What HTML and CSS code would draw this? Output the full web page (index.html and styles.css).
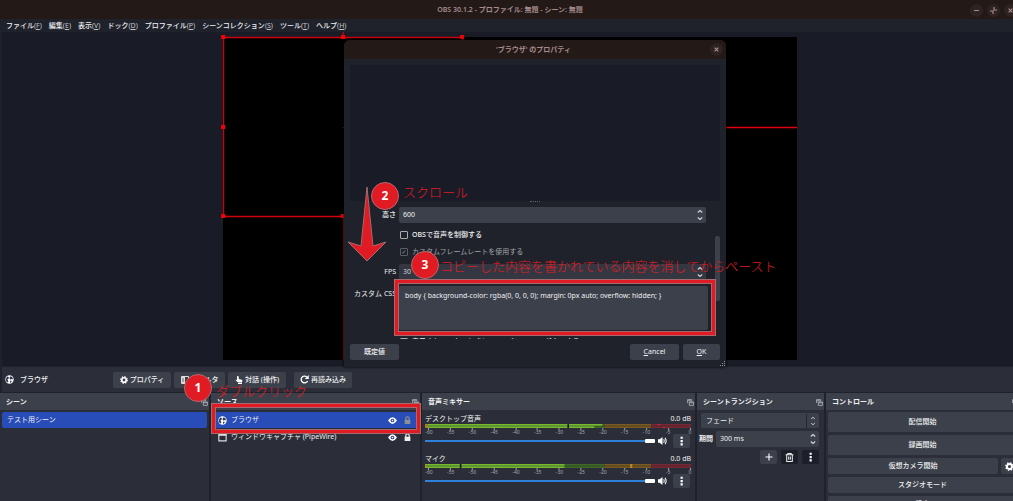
FILE: index.html
```html
<!DOCTYPE html>
<html lang="ja">
<head>
<meta charset="utf-8">
<title>OBS 30.1.2</title>
<link rel="stylesheet" href="styles.css">
</head>
<body>
<svg class="defs" aria-hidden="true">
  <symbol id="i-globe" viewBox="0 0 16 16"><circle cx="8" cy="8" r="7.500" fill="#fff"/><path d="M4 2.500 7 4 6 7 4 8 6 11 5 13.500 2 11 1.500 7zM10 2l3 2 1.500 4-2.500-1-3 1-1-3zM9 10l3 0-1 3-2 1z" fill="#2a3350"/></symbol>
  <symbol id="i-gear" viewBox="0 0 16 16"><circle cx="8" cy="8" r="4.500" fill="none" stroke="#fff" stroke-width="3.400"/><circle cx="8" cy="8" r="6.600" fill="none" stroke="#fff" stroke-width="2.400" stroke-dasharray="2.700 2.480"/></symbol>
  <symbol id="i-filter" viewBox="0 0 16 16"><path d="M1 1h14v14H1z" fill="none" stroke="#ddd" stroke-width="2"/><path d="M2 2h6v12H2z" fill="#ddd"/><path d="M4 4v8" stroke="#444" stroke-width="1.500"/></symbol>
  <symbol id="i-hand" viewBox="0 0 16 16"><path d="M4 0.500q2.500-1 3.500 1V6l6 1.500q1.500.5 1.200 2L14 13H6L1 8q1-1.500 3 0zM6 14h8v2H6z" fill="#fff"/></symbol>
  <symbol id="i-reload" viewBox="0 0 16 16"><path d="M13.500 10.500A6 6 0 1 1 12 3.500" fill="none" stroke="#fff" stroke-width="2.400"/><path d="M15.500 0v7H8.500z" fill="#fff"/></symbol>
  <symbol id="i-eye" viewBox="0 0 16 12"><path d="M0 6q8-12 16 0-8 12-16 0z" fill="#fff"/><circle cx="8" cy="6" r="3.300" fill="#29438f"/><circle cx="8" cy="6" r="1.500" fill="#fff"/></symbol>
  <symbol id="i-lock" viewBox="0 0 12 14"><path d="M3 7V4.500a3 3 0 0 1 6 0V7" fill="none" stroke="currentColor" stroke-width="2"/><path d="M1 6.500h10V14H1z" fill="currentColor"/></symbol>
  <symbol id="i-window" viewBox="0 0 16 16"><path d="M1.500 2h13v12h-13z" fill="none" stroke="#ddd" stroke-width="2"/><path d="M1 1h14v4H1z" fill="#ddd"/></symbol>
  <symbol id="i-float" viewBox="0 0 12 12"><path d="M1 7V1h7v2M1 3h7M4 5h7v6H4zM4 6.500h7" fill="none" stroke="#b9bbc1" stroke-width="1.300"/></symbol>
  <symbol id="i-speaker" viewBox="0 0 16 14"><path d="M0 4h3l5-4v14L3 10H0z" fill="#fff"/><path d="M10 4q2 3 0 6M12.500 1.500q4 5.500 0 11" fill="none" stroke="#fff" stroke-width="1.800"/></symbol>
  <symbol id="i-dots" viewBox="0 0 4 16"><path d="M.5 1h3.500v3.500H.5zM.5 6.300H4v3.500H.5zM.5 11.600H4v3.500H.5z" fill="#fff"/></symbol>
  <symbol id="i-plus" viewBox="0 0 16 16"><path d="M8 1v14M1 8h14" stroke="#fff" stroke-width="2.200"/></symbol>
  <symbol id="i-trash" viewBox="0 0 16 16"><path d="M1 3h14M5 2.500V1h6v1.500M3 3.500V15h10V3.500M6.500 6v6M9.500 6v6" fill="none" stroke="#eee" stroke-width="1.800"/></symbol>
  <symbol id="i-spin" viewBox="0 0 6 12"><path d="M.8 3.500 3 1.500 5.200 3.500M.8 8.500 3 10.500 5.200 8.500" fill="none" stroke="#d5d6d9" stroke-width="1.100"/></symbol>
  <symbol id="i-x" viewBox="0 0 8 8"><path d="M1 1l6 6M7 1 1 7" stroke="currentColor" stroke-width="2"/></symbol>
</svg>

<div class="app">
  <header class="titlebar">
    <span></span>
    <h1 class="title">OBS 30.1.2 - プロファイル: 無題 - シーン: 無題</h1>
    <div class="winbtns">
      <button class="round" aria-label="最小化"><svg width="5" height="5" viewBox="0 0 5 5"><path d="M0 2.500h5" stroke="currentColor"/></svg></button>
      <button class="round" aria-label="元に戻す"><svg width="7" height="7" viewBox="0 0 7 7"><path d="M4 0v3h3M0 4h3v3" fill="none" stroke="currentColor" stroke-width="1.200"/></svg></button>
      <button class="round" aria-label="閉じる"><svg width="5" height="5"><use href="#i-x"/></svg></button>
    </div>
  </header>
  <nav class="menubar">
    <button>ファイル<span class="key">(<u>F</u>)</span></button><button>編集<span class="key">(<u>E</u>)</span></button><button>表示<span class="key">(<u>V</u>)</span></button><button>ドック<span class="key">(<u>D</u>)</span></button><button>プロファイル<span class="key">(<u>P</u>)</span></button><button>シーンコレクション<span class="key">(<u>S</u>)</span></button><button>ツール<span class="key">(<u>T</u>)</span></button><button>ヘルプ<span class="key">(<u>H</u>)</span></button>
  </nav>
  <main class="preview">
    <div class="canvas">
      <svg class="selection" viewBox="0 0 574 323">
        <path d="M120.500 180v143M120 90.500h454" stroke="#a80008" fill="none"/>
        <path d="M400 90.500h174" stroke="#e0000c" stroke-width="1.300"/>
        <path d="M.5.500h239v179H.5zM120-5v5" stroke="#cf0008" fill="none" stroke-width="1.300"/>
        <path d="M-2-2h4v4h-4zM118-2h4v4h-4zM237-2h4v4h-4zM-2 88h4v4h-4zM-2 177h4v4h-4zM118 177h4v4h-4z" fill="#f40009"/>
      </svg>
    </div>
  </main>
  <section class="context">
    <svg class="ic9"><use href="#i-globe"/></svg>
    <span class="context-name">ブラウザ</span>
    <div class="context-btns">
      <button class="btn"><svg class="ic8"><use href="#i-gear"/></svg>プロパティ</button>
      <button class="btn filter"><svg class="ic8"><use href="#i-filter"/></svg>フィルタ</button>
      <button class="btn"><svg class="ic8"><use href="#i-hand"/></svg>対話 (操作)</button>
      <button class="btn reload"><svg class="ic9"><use href="#i-reload"/></svg>再読み込み</button>
    </div>
  </section>

  <div class="docks">
    <section class="dock">
      <h2 class="dock-head">シーン<svg class="ic6"><use href="#i-float"/></svg></h2>
      <ul class="list scenes"><li class="row selected">テスト用シーン</li></ul>
    </section>
    <section class="dock">
      <h2 class="dock-head">ソース<svg class="ic6"><use href="#i-float"/></svg></h2>
      <ul class="list">
        <li class="row source selected"><svg class="ic9"><use href="#i-globe"/></svg><span class="grow">ブラウザ</span><svg class="eye"><use href="#i-eye"/></svg><svg class="lock dim"><use href="#i-lock"/></svg></li>
        <li class="row source"><svg class="ic9"><use href="#i-window"/></svg><span class="grow">ウィンドウキャプチャ (PipeWire)</span><svg class="eye"><use href="#i-eye"/></svg><svg class="lock"><use href="#i-lock"/></svg></li>
      </ul>
    </section>
    <section class="dock">
      <h2 class="dock-head">音声ミキサー<svg class="ic6"><use href="#i-float"/></svg></h2>
      <div class="mixer">
        <div class="channel">
          <div class="channel-top"><label for="v1">デスクトップ音声</label><span>0.0 dB</span></div>
          <svg class="meter" viewBox="0 0 267 6" preserveAspectRatio="none">
            <path d="M0 0h180v4H0z" fill="#3f6a26"/><path d="M180 0h47v4h-47z" fill="#7a5a1f"/><path d="M227 0h40v4h-40z" fill="#782733"/>
            <path d="M0 0h178v2H0zM0 2h170v2H0z" fill="#75b92f"/><path d="M0 2h267" stroke="#20242c" stroke-width=".5"/><path d="M0 0h3v4H0z" fill="#a87a24"/><path d="M143 0h1.500v4H143z" fill="#10140f"/><path d="M234 0h2v1h-2zM239 3h2v1h-2z" fill="#e02b3d"/>
            <path d="M3.500 4v2M25.500 4v2M47.500 4v2M69.500 4v2M91.500 4v2M112.500 4v2M134.500 4v2M156.500 4v2M178.500 4v2M200.500 4v2M222.500 4v2M244.500 4v2M266.500 4v2" stroke="#9b9da3"/>
          </svg>
          <div class="scale"><span>-60</span><span>-55</span><span>-50</span><span>-45</span><span>-40</span><span>-35</span><span>-30</span><span>-25</span><span>-20</span><span>-15</span><span>-10</span><span>-5</span><span>0</span></div>
          <div class="fader"><input id="v1" type="range" value="100"><svg class="spk"><use href="#i-speaker"/></svg><button class="btn more" aria-label="メニュー"><svg class="dots"><use href="#i-dots"/></svg></button></div>
        </div>
        <div class="channel">
          <div class="channel-top"><label for="v2">マイク</label><span>0.0 dB</span></div>
          <svg class="meter" viewBox="0 0 267 6" preserveAspectRatio="none">
            <path d="M0 0h180v4H0z" fill="#3f6a26"/><path d="M180 0h47v4h-47z" fill="#7a5a1f"/><path d="M227 0h40v4h-40z" fill="#782733"/>
            <path d="M0 0h140v4H0z" fill="#75b92f"/><path d="M0 2h267" stroke="#20242c" stroke-width=".5"/><path d="M0 0h1v4H0zM206 0h2v4h-2z" fill="#c08a20"/><path d="M35 0h1.500v4H35z" fill="#10140f"/>
            <path d="M3.500 4v2M25.500 4v2M47.500 4v2M69.500 4v2M91.500 4v2M112.500 4v2M134.500 4v2M156.500 4v2M178.500 4v2M200.500 4v2M222.500 4v2M244.500 4v2M266.500 4v2" stroke="#9b9da3"/>
          </svg>
          <div class="scale"><span>-60</span><span>-55</span><span>-50</span><span>-45</span><span>-40</span><span>-35</span><span>-30</span><span>-25</span><span>-20</span><span>-15</span><span>-10</span><span>-5</span><span>0</span></div>
          <div class="fader"><input id="v2" type="range" value="100"><svg class="spk"><use href="#i-speaker"/></svg><button class="btn more" aria-label="メニュー"><svg class="dots"><use href="#i-dots"/></svg></button></div>
        </div>
      </div>
    </section>
    <section class="dock">
      <h2 class="dock-head">シーントランジション<svg class="ic6"><use href="#i-float"/></svg></h2>
      <div class="transitions">
        <div class="field combo"><select aria-label="トランジション"><option>フェード</option></select><svg class="spin"><use href="#i-spin"/></svg></div>
        <div class="duration"><label for="dur">期間</label><div class="field"><input id="dur" type="text" value="300 ms"><svg class="spin"><use href="#i-spin"/></svg></div></div>
        <div class="tools"><button class="btn tool" aria-label="追加"><svg class="ic8"><use href="#i-plus"/></svg></button><button class="btn tool dark" aria-label="削除"><svg class="ic9"><use href="#i-trash"/></svg></button><button class="btn tool dark" aria-label="メニュー"><svg class="dots"><use href="#i-dots"/></svg></button></div>
      </div>
    </section>
    <section class="dock">
      <h2 class="dock-head">コントロール<svg class="ic6"><use href="#i-float"/></svg></h2>
      <div class="controls">
        <button class="btn tall">配信開始</button>
        <button class="btn tall">録画開始</button>
        <div class="pair"><button class="btn grow">仮想カメラ開始</button><button class="btn gear" aria-label="仮想カメラ設定"><svg class="ic9"><use href="#i-gear"/></svg></button></div>
        <button class="btn">スタジオモード</button>
        <button class="btn">設定</button>
      </div>
    </section>
  </div>

  <div class="dialog" role="dialog" aria-labelledby="dt">
    <header class="dialog-title"><span></span><h2 id="dt">'ブラウザ' のプロパティ</h2><button class="round" aria-label="閉じる"><svg width="5" height="5"><use href="#i-x"/></svg></button></header>
    <div class="dialog-body">
      <div class="source-view"></div>
      <div class="splitter"></div>
      <div class="form-area">
        <form class="form">
          <div class="form-row"><label class="strong" for="h">高さ</label><div class="field"><input id="h" type="text" value="600"><svg class="spin"><use href="#i-spin"/></svg></div></div>
          <div class="checks">
            <label class="check strong"><input type="checkbox">OBSで音声を制御する</label>
            <label class="check off"><input type="checkbox" checked disabled>カスタムフレームレートを使用する</label>
          </div>
          <div class="form-row"><label for="fps">FPS</label><div class="field off"><input id="fps" type="text" value="30"><svg class="spin"><use href="#i-spin"/></svg></div></div>
          <div class="form-row css"><label for="css">カスタム CSS</label><textarea id="css" spellcheck="false">body { background-color: rgba(0, 0, 0, 0); margin: 0px auto; overflow: hidden; }</textarea></div>
          <div class="checks"><label class="check strong"><input type="checkbox">表示されていないときにソースをシャットダウンする</label></div>
        </form>
        <div class="scrollbar"><div class="thumb"></div></div>
      </div>
      <footer class="dialog-foot"><button class="btn strong">既定値</button><span class="grow"></span><button class="btn"><span><u>C</u>ancel</span></button><button class="btn ok"><span><u>O</u>K</span></button></footer>
      <svg class="grip" viewBox="0 0 6 6"><path d="M4 0h1v1H4zM2 2h1v1H2zM4 2h1v1H4zM0 4h1v1H0zM2 4h1v1H2zM4 4h1v1H4z" fill="#8a8c92"/></svg>
    </div>
  </div>

  <svg class="arrow" viewBox="0 0 40 76"><path d="M20 1 26 60 39 56 20 75 1 56 14 60z" fill="#e01b24" stroke="#a36a70" stroke-width="1"/></svg>
  <div class="frame frame-css"></div>
  <div class="frame frame-source"></div>
  <div class="step step1">1</div><div class="note note1">ダブルクリック</div>
  <div class="step step2">2</div><div class="note note2">スクロール</div>
  <div class="step step3">3</div><div class="note note3">コピーした内容を書かれている内容を消してからペースト</div>
</div>
</body>
</html>
```
FILE: styles.css
```css
* { box-sizing: border-box; }
body {
  margin: 0;
  height: 100vh;
  overflow: hidden;
  background: #1f222a;
  color: #f0f0f2;
  font: 400 7px/10px "Noto Sans", "Noto Sans CJK JP", sans-serif;
}
button, input, select, textarea { font: inherit; color: inherit; border: 0; padding: 0; margin: 0; background: none; }
h1, h2, ul { margin: 0; padding: 0; font-size: inherit; list-style: none; }
svg { display: block; flex: none; overflow: visible; }
.defs { position: absolute; width: 0; height: 0; }
.grow { flex: 1; }
.strong { font-weight: 500; }
.ic6 { width: 7px; height: 7px; }
.ic8 { width: 8px; height: 8px; }
.ic9 { width: 9px; height: 9px; }

/* The window is a little wider than the viewport, so its right edge is cut */
.app { position: relative; display: flex; flex-direction: column; width: calc(100% + 7px); height: 100%; }

.titlebar { display: grid; grid-template-columns: 1fr auto 1fr; align-items: center; height: 19px; padding-top: 1px; background: #231917; color: #a58b8c; }
.title { font-weight: 600; }
.winbtns { display: flex; justify-content: flex-end; gap: 4px; padding-right: 3px; }
.round { display: grid; place-items: center; width: 13px; height: 13px; border-radius: 50%; background: #2e2222; color: #a58b8c; }
.menubar { display: flex; gap: 7px; height: 13px; padding: 1px 0 0 6px; align-items: center; white-space: nowrap; font-weight: 500; }
.key { font-weight: 400; color: #c4c5ca; }
.preview { flex: 1; min-height: 0; display: flex; justify-content: center; margin-left: 2px; padding: 5px 2px 6px 0; background: #191c27; }
.canvas { height: 100%; aspect-ratio: 16 / 9; background: #000; }
.selection { width: 100%; height: 100%; }

.btn { display: flex; align-items: center; justify-content: center; gap: 2px; height: 16px; border-radius: 2px; background: #3c404b; white-space: nowrap; }
.context { display: flex; align-items: center; height: 25px; margin: 1px 0 1px 2px; padding-left: 3px; background: #2b2e38; font-weight: 500; }
.context-name { width: 99px; padding-left: 6px; }
.context-btns { display: flex; gap: 3px; }
.context-btns .btn { width: 58px; }
.context-btns .filter { width: 51px; }
.context-btns .reload { margin-left: 5px; }

.docks { flex: 0 0 108px; display: grid; grid-template-columns: 209fr 209fr 273fr 127fr 194fr; gap: 2px; overflow: hidden; }
.dock { min-width: 0; background: #2b2e38; }
.dock-head { display: flex; align-items: center; justify-content: space-between; height: 17px; padding: 1px 1px 0 6px; background: #3c404b; font-weight: 700; }
.list { display: grid; gap: 1px; padding: 2px 2px 0; }
.row { display: flex; align-items: center; height: 16px; padding-left: 5px; border-radius: 2px; }
.source { gap: 4px; padding-right: 7px; }
.selected { background: #284cb8; }
.eye { width: 9px; height: 7px; margin-right: 3px; }
.lock { width: 7px; height: 8px; }
.dim { color: #8d8f93; }

.mixer { display: grid; gap: 5px; padding: 3px 4px 0 3px; }
.channel-top { display: flex; justify-content: space-between; line-height: 11px; }
.meter { width: 100%; height: 6px; }
.scale { display: flex; justify-content: space-between; margin-right: -3px; color: #a6a8ad; font-size: 5px; line-height: 4px; }
.scale span { width: 8px; text-align: center; }
.fader { display: flex; align-items: center; height: 14px; }
.fader input { flex: 1; min-width: 0; height: 4px; appearance: none; background: linear-gradient(#2b2e38 1px, #2f80d8 1px 3px, #2b2e38 3px); }
.fader input::-webkit-slider-thumb { appearance: none; width: 10px; height: 4px; border-radius: 1px; background: #fff; }
.spk { width: 9px; height: 8px; margin: 0 6px 0 3px; }
.more { width: 17px; height: 14px; margin-right: 1px; }
.dots { width: 3px; height: 10px; }

.field { display: flex; align-items: center; flex: 1; height: 16px; padding: 0 3px 0 4px; border-radius: 2px; background: #3c404b; }
.field input, .field select { flex: 1; min-width: 0; width: 0; appearance: none; }
.spin { width: 6px; height: 12px; }
.transitions { display: grid; gap: 3px; padding: 3px 5px 0 2px; }
.combo { height: 15px; margin-left: 2px; padding-left: 5px; }
.combo .spin { height: 10px; box-sizing: content-box; padding: 2px 0 2px 3px; border-left: 1px solid #242730; }
.duration { display: flex; align-items: center; gap: 3px; font-weight: 600; }
.duration input { font-weight: 400; }
.tools { display: flex; justify-content: flex-end; gap: 4px; }
.tool { width: 17px; height: 14px; }
.dark { background: #1c1f2a; }
.controls { display: grid; gap: 3px; padding: 2px 3px 0 2px; font-weight: 500; }
.tall { height: 20px; }
.pair { display: flex; gap: 3px; }
.gear { width: 16px; }

.dialog { position: absolute; left: 344px; top: 40px; width: 382px; border-radius: 6px 6px 0 0; background: #1f222a; overflow: hidden; box-shadow: 0 0 3px #000; }
.dialog-title { display: grid; grid-template-columns: 1fr auto 1fr; align-items: center; height: 19px; padding-right: 3px; background: #231917; color: #a58b8c; }
.dialog-title h2 { font-weight: 600; }
.dialog-title .round { justify-self: end; }
.dialog-body { position: relative; padding: 6px 6px 7px; }
.source-view { height: 136px; background: #191c27; }
.splitter { width: 10px; margin: 0 auto; border-top: 1px dotted #5a5d66; }
.form-area { display: flex; justify-content: space-between; height: 137px; padding-top: 5px; overflow: hidden; }
.form { display: flex; flex-direction: column; gap: 4px; width: 356px; }
.form-row { display: grid; grid-template-columns: 46px 1fr; gap: 3px; align-items: center; text-align: right; white-space: nowrap; }
.form-row label { justify-self: end; }
.checks { display: grid; gap: 1px; padding-left: 50px; }
.check { display: flex; align-items: center; gap: 4px; height: 16px; white-space: nowrap; }
.check input { appearance: none; display: grid; place-items: center; width: 8px; height: 8px; border: 1px solid #a9abb0; border-radius: 1px; }
.off { color: #a0a2a8; }
.off input:checked { border-color: #5b5e66; }
.off input:checked::before { content: "✓"; font: 6px/6px "DejaVu Sans", sans-serif; color: #9a9ca2; }
.field.off { background: #343741; color: #d0d1d5; }
.css { align-items: start; margin: 2px -2px 0 0; }
.css label { padding-top: 3px; }
textarea { display: block; width: 100%; height: 44px; padding: 5px 6px; resize: none; border-radius: 2px; background: #3c404b; }
.scrollbar { width: 5px; padding-top: 29px; }
.thumb { height: 65px; border-radius: 2px; background: #3c404b; }
.dialog-foot { display: flex; gap: 4px; padding-top: 5px; }
.dialog-foot .btn { width: 49px; }
.dialog-foot .ok { width: 37px; }
.grip { position: absolute; right: 0; bottom: 0; width: 6px; height: 6px; }

/* Tutorial annotations drawn over the window */
.step { position: absolute; width: 28px; height: 28px; border: 1px solid #b5666c; border-radius: 50%; background: #e01b24; color: #fff; font-size: 12px; font-weight: 700; line-height: 26px; text-align: center; }
.note { position: absolute; color: #e01b24; font-family: "Noto Sans CJK JP", sans-serif; font-size: 13px; font-weight: 300; line-height: 18px; white-space: nowrap; }
.frame { position: absolute; border: 4px solid #e01b24; outline: 1px solid #a36a70; outline-offset: -1px; box-shadow: inset 0 0 0 1px #a36a70; }
.frame-css { left: 394px; top: 279px; width: 322px; height: 57px; }
.frame-source { left: 211px; top: 403px; width: 210px; height: 31px; }
.arrow { position: absolute; left: 347px; top: 186px; width: 40px; height: 76px; }
.step1 { left: 184px; top: 374px; }
.step2 { left: 371px; top: 182px; }
.step3 { left: 411px; top: 251px; }
.note1 { left: 216px; top: 382px; }
.note2 { left: 403px; top: 183px; }
.note3 { left: 440px; top: 257px; }
```
